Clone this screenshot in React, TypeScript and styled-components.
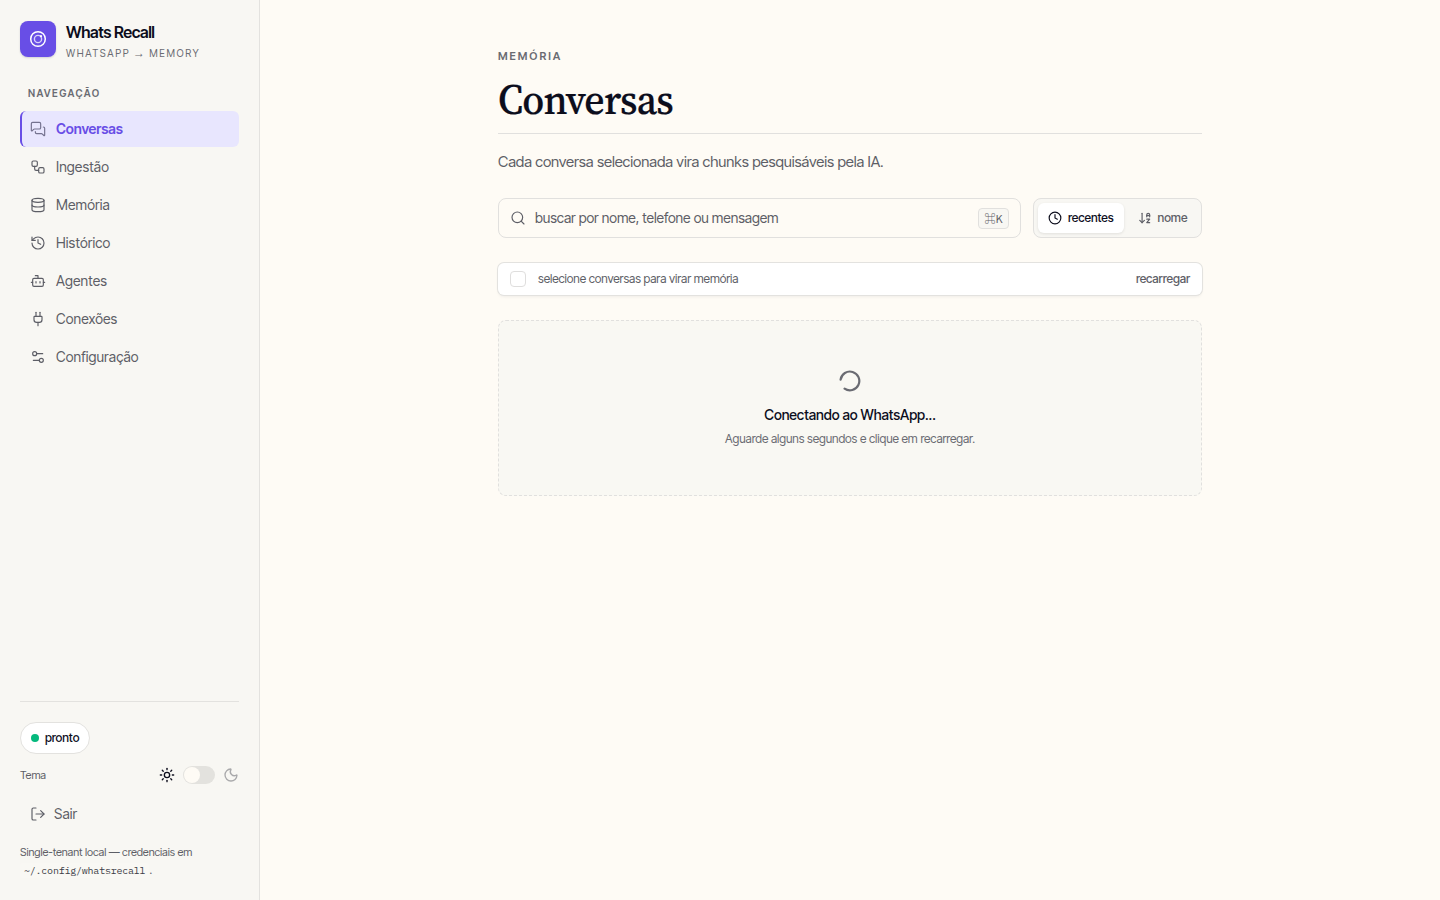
import React from "react";
import styled, { createGlobalStyle } from "styled-components";
import {
  ArrowDownAZ, Bot, Clock, Database, History, LogOut, MessagesSquare, Moon,
  Plug, Search, Settings2, Sun, Workflow,
} from "lucide-react";

const Global = createGlobalStyle`
  *, *::before, *::after { box-sizing: border-box; }
  body {
    margin: 0;
    background: #fefbf5;
    color: #0c0d1c;
    font-family: "Inter Tight", Inter, "Liberation Sans", sans-serif;
    font-size: 14px;
    letter-spacing: -0.08px;
  }
  h1, p { margin: 0; }
  button { font: inherit; letter-spacing: inherit; border: 0; background: none; padding: 0; }
`;

const Shell = styled.div`
  display: grid;
  grid-template-columns: 260px 1fr;
  height: 100vh;
`;

const Sidebar = styled.aside`
  display: flex;
  flex-direction: column;
  padding: 20px 20px 20px;
  background: #f8f7f3;
  border-right: 1px solid #e3e2df;
`;

const Brand = styled.div`
  display: flex;
  align-items: center;
  gap: 10px;
  height: 38px;
`;

const Logo = styled.div`
  display: grid;
  place-items: center;
  width: 36px;
  height: 36px;
  border-radius: 8px;
  background: #684ee6;
  box-shadow: 0 1px 2px rgba(20, 16, 60, 0.16);
`;

const BrandText = styled.div`
  padding-top: 4px;
`;

const BrandName = styled.div`
  font-size: 16px;
  font-weight: 600;
  line-height: 20px;
  letter-spacing: -0.025em;
`;

const BrandTag = styled.div`
  margin-top: 4px;
  font-size: 10px;
  line-height: 14px;
  letter-spacing: 0.16em;
  color: #6a6b72;
`;

const Arrow = styled.span`
  margin: 0 -1.2px;
  font-family: "Liberation Sans", sans-serif;
  font-size: 12px;
  line-height: 1;
`;

const NavTitle = styled.div`
  margin: 28px 0 11px 8px;
  font-size: 10px;
  font-weight: 600;
  line-height: 14px;
  letter-spacing: 0.14em;
  color: #6a6b72;
`;

const Nav = styled.nav`
  display: flex;
  flex-direction: column;
  gap: 2px;
`;

const NavItem = styled.a<{ $active?: boolean }>`
  display: flex;
  align-items: center;
  gap: 10px;
  height: 36px;
  padding-left: 8px;
  border-left: 2px solid ${(p) => (p.$active ? "#684ee6" : "transparent")};
  border-radius: 6px;
  background: ${(p) => (p.$active ? "#e8e6fe" : "transparent")};
  color: ${(p) => (p.$active ? "#684ee6" : "#5d5e66")};
  font-weight: ${(p) => (p.$active ? 600 : 400)};
  letter-spacing: ${(p) => (p.$active ? "-0.08px" : "0.13px")};
  svg { color: ${(p) => (p.$active ? "#74728f" : "#5d5e66")}; }
`;

const NavLabel = styled.span`
  padding-bottom: 2px;
`;

const Footer = styled.div`
  display: flex;
  flex-direction: column;
  margin-top: auto;
  padding-top: 20px;
  border-top: 1px solid #e3e2df;
`;

const Status = styled.div`
  display: flex;
  align-items: center;
  align-self: flex-start;
  gap: 6px;
  height: 32px;
  padding: 0 10px;
  border: 1px solid #e3e2df;
  border-radius: 16px;
  background: #fff;
  font-size: 12px;
  font-weight: 500;
  line-height: 16px;
  span:last-child { padding-bottom: 1px; }
`;

const Dot = styled.span`
  width: 8px;
  height: 8px;
  border-radius: 50%;
  background: #05b97d;
`;

const ThemeRow = styled.div`
  display: flex;
  align-items: center;
  gap: 8px;
  height: 18px;
  margin-top: 12px;
  color: #5d5e66;
`;

const ThemeLabel = styled.span`
  flex: 1;
  font-size: 11px;
`;

const Switch = styled.span`
  width: 32px;
  height: 18px;
  padding: 1px;
  border-radius: 9px;
  background: #e3e2de;
  &::before {
    content: "";
    display: block;
    width: 16px;
    height: 16px;
    border-radius: 50%;
    background: #fefbf5;
  }
`;

const Logout = styled.button`
  display: flex;
  align-items: center;
  gap: 8px;
  height: 36px;
  margin-top: 12px;
  padding-left: 10px;
  color: #5d5e66;
  letter-spacing: 0.13px;
`;

const Note = styled.p`
  margin-top: 11px;
  font-size: 11px;
  line-height: 18px;
  color: #5d5e66;
`;

const Code = styled.code`
  padding: 1px 4px;
  border-radius: 3px;
  background: #f9f8f4;
  font-family: "IBM Plex Mono", "Liberation Mono", monospace;
  font-size: 10px;
  letter-spacing: -0.22px;
  color: #3c3d47;
`;

const Main = styled.main`
  display: flex;
  justify-content: center;
  padding-top: 48px;
`;

const Page = styled.div`
  width: 704px;
`;

const Eyebrow = styled.div`
  font-size: 11px;
  font-weight: 600;
  line-height: 16px;
  letter-spacing: 0.18em;
  color: #6a6b72;
`;

const Title = styled.h1`
  height: 70px;
  padding-top: 12px;
  border-bottom: 1px solid #e1e0de;
  font-family: "Source Serif 4", "Liberation Serif", serif;
  font-size: 42px;
  font-weight: 500;
  line-height: 46px;
  letter-spacing: -0.84px;
  -webkit-text-stroke: 0.2px #0c0d1c;
`;

const Condensed = styled.span`
  display: inline-block;
  transform: scaleX(0.948);
  transform-origin: left;
`;

const Lead = styled.p`
  margin-top: 16px;
  font-size: 15px;
  line-height: 24px;
  color: #5d5e66;
`;

const Toolbar = styled.div`
  display: flex;
  gap: 12px;
  margin-top: 24px;
`;

const SearchBox = styled.div`
  display: flex;
  align-items: center;
  flex: 1;
  gap: 9px;
  height: 40px;
  padding: 0 11px;
  border: 1px solid #e1e0de;
  border-radius: 8px;
  color: #5d5e66;
`;

const Placeholder = styled.span`
  flex: 1;
  padding-bottom: 2px;
`;

const Kbd = styled.kbd`
  display: flex;
  align-items: center;
  justify-content: center;
  width: 31px;
  height: 21px;
  border: 1px solid #e1e0de;
  border-radius: 4px;
  background: #f8f7f3;
  font-family: "Noto Sans CJK JP", sans-serif;
  font-size: 11px;
  line-height: 14px;
  letter-spacing: -0.1px;
`;

const Segmented = styled.div`
  display: flex;
  width: 169px;
  height: 40px;
  padding: 4px;
  border: 1px solid #e1e0de;
  border-radius: 8px;
  background: #f8f7f3;
`;

const Segment = styled.button<{ $active?: boolean }>`
  display: flex;
  align-items: center;
  gap: 6px;
  padding: 0 10px;
  border-radius: 6px;
  font-size: 12px;
  font-weight: 500;
  line-height: 16px;
  white-space: nowrap;
  color: ${(p) => (p.$active ? "#0c0d1c" : "#5d5e66")};
  background: ${(p) => (p.$active ? "#fff" : "transparent")};
  box-shadow: ${(p) => (p.$active ? "0 1px 3px rgba(20, 20, 30, 0.1)" : "none")};
  & + & { margin-left: 4px; }
`;

const SelectionBar = styled.div`
  display: flex;
  align-items: center;
  gap: 12px;
  height: 32px;
  margin-top: 25px;
  padding: 0 12px;
  border-radius: 6px;
  background: #fff;
  box-shadow: 0 0 0 1px #e3e2df, 0 2px 3px rgba(20, 20, 30, 0.06);
  font-size: 12px;
  line-height: 16px;
  color: #5d5e66;
`;

const Hint = styled.span`
  padding-bottom: 1px;
`;

const Checkbox = styled.span`
  width: 16px;
  height: 16px;
  border: 1px solid #dfdedd;
  border-radius: 4px;
`;

const Reload = styled.button`
  margin-left: auto;
  padding-bottom: 1px;
  font-weight: 500;
  color: #5d5e66;
`;

const Empty = styled.section`
  display: flex;
  flex-direction: column;
  align-items: center;
  height: 176px;
  margin-top: 25px;
  padding-top: 49px;
  border: 1px dashed #e1e0de;
  border-radius: 8px;
  background: #f9f8f3;
`;

const EmptyTitle = styled.p`
  margin-top: 12px;
  line-height: 22px;
  font-weight: 500;
`;

const EmptyText = styled.p`
  margin-top: 3px;
  font-size: 12px;
  line-height: 20px;
  color: #6a6b72;
`;

const items = [
  { label: "Conversas", Icon: MessagesSquare },
  { label: "Ingestão", Icon: Workflow },
  { label: "Memória", Icon: Database },
  { label: "Histórico", Icon: History },
  { label: "Agentes", Icon: Bot },
  { label: "Conexões", Icon: Plug },
  { label: "Configuração", Icon: Settings2 },
];

export default function App() {
  return (
    <Shell>
      <Global />
      <Sidebar>
        <Brand>
          <Logo>
            <svg width="18" height="18" viewBox="0 0 18 18" fill="none" stroke="#fff">
              <circle cx="9" cy="9" r="7.3" strokeWidth="1.5" />
              <circle cx="9" cy="9" r="3.6" strokeWidth="1.4" opacity="0.75" />
              <circle cx="12" cy="6.2" r="1.1" fill="#fff" stroke="none" />
            </svg>
          </Logo>
          <BrandText>
            <BrandName>Whats Recall</BrandName>
            <BrandTag>WHATSAPP <Arrow>→</Arrow> MEMORY</BrandTag>
          </BrandText>
        </Brand>
        <NavTitle>NAVEGAÇÃO</NavTitle>
        <Nav>
          {items.map(({ label, Icon }, i) => (
            <NavItem key={label} $active={i === 0}>
              <Icon size={16} strokeWidth={1.75} />
              <NavLabel>{label}</NavLabel>
            </NavItem>
          ))}
        </Nav>
        <Footer>
          <Status><Dot /><span>pronto</span></Status>
          <ThemeRow>
            <ThemeLabel>Tema</ThemeLabel>
            <Sun size={16} strokeWidth={2} color="#0c0d1c" />
            <Switch />
            <Moon size={16} strokeWidth={2} color="#a9a9ab" />
          </ThemeRow>
          <Logout><LogOut size={16} strokeWidth={1.75} /><NavLabel>Sair</NavLabel></Logout>
          <Note>Single-tenant local — credenciais em <Code>~/.config/whatsrecall</Code>.</Note>
        </Footer>
      </Sidebar>
      <Main>
        <Page>
          <Eyebrow>MEMÓRIA</Eyebrow>
          <Title><Condensed>Conversas</Condensed></Title>
          <Lead>Cada conversa selecionada vira chunks pesquisáveis pela IA.</Lead>
          <Toolbar>
            <SearchBox>
              <Search size={16} strokeWidth={1.75} />
              <Placeholder>buscar por nome, telefone ou mensagem</Placeholder>
              <Kbd>⌘K</Kbd>
            </SearchBox>
            <Segmented>
              <Segment $active><Clock size={14} strokeWidth={2} /><span>recentes</span></Segment>
              <Segment><ArrowDownAZ size={14} strokeWidth={2} /><span>nome</span></Segment>
            </Segmented>
          </Toolbar>
          <SelectionBar>
            <Checkbox />
            <Hint>selecione conversas para virar memória</Hint>
            <Reload>recarregar</Reload>
          </SelectionBar>
          <Empty>
            <svg width="22" height="22" viewBox="0 0 22 22" fill="none" stroke="#6a6b72" strokeWidth="2.2" strokeLinecap="round">
              <path d="M1.6 9.6A9.4 9.4 0 1 1 5.6 18.7" />
            </svg>
            <EmptyTitle>Conectando ao WhatsApp...</EmptyTitle>
            <EmptyText>Aguarde alguns segundos e clique em recarregar.</EmptyText>
          </Empty>
        </Page>
      </Main>
    </Shell>
  );
}
